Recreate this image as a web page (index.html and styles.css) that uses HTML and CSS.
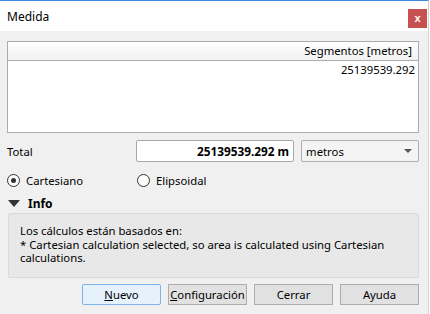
FILE: index.html
```html
<!DOCTYPE html>
<html lang="es">
<head>
    <meta charset="UTF-8">
    <title>Medida</title>
    <link rel="stylesheet" href="styles.css">
</head>
<body>
    <div class="window">
        <div class="titlebar">
            <span class="title">Medida</span>
            <button class="close">x</button>
        </div>
        <div class="content">
            <div class="table">
                <div class="th">Segmentos [metros]</div>
                <div class="td">25139539.292</div>
            </div>

            <div class="total-row">
                <span class="label">Total</span>
                <div class="total-input">25139539.292 m</div>
                <div class="combo">
                    <span>metros</span>
                    <span class="arrow"></span>
                </div>
            </div>

            <div class="radio-row">
                <label class="radio checked"><span class="dot"></span>Cartesiano</label>
                <label class="radio"><span class="dot"></span>Elipsoidal</label>
            </div>

            <div class="info-head">
                <span class="tri"></span>
                <span>Info</span>
            </div>
            <div class="info-box">
                Los cálculos están basados en:<br>
                * Cartesian calculation selected, so area is calculated using Cartesian calculations.
            </div>

            <div class="buttons">
                <button class="btn default"><u>N</u>uevo</button>
                <button class="btn"><u>C</u>onfiguración</button>
                <button class="btn">Cerrar</button>
                <button class="btn">Ayuda</button>
            </div>
        </div>
    </div>
</body>
</html>
```

FILE: styles.css
```css
body {
    margin: 0;
    background: #ffffff;
    font-family: "Noto Sans", "Open Sans", sans-serif;
    font-size: 11.3px;
    color: #000;
}

.window {
    width: 428px;
    height: 313px;
    border-top: 1px solid #3d8bd9;
    border-right: 1px solid #d4d4d4;
    background: #f0f0f0;
    display: flex;
    flex-direction: column;
}

.titlebar {
    height: 30px;
    background: #ffffff;
    display: flex;
    justify-content: space-between;
    align-items: flex-start;
}

.title {
    margin: 7px 0 0 7px;
    font-size: 12px;
}

.close {
    width: 19px;
    height: 19px;
    margin-top: 8px;
    margin-right: 1px;
    border: none;
    padding: 0;
    background: #c75050;
    color: #fff;
    font-family: "Liberation Sans", sans-serif;
    font-weight: bold;
    font-size: 11px;
    line-height: 17px;
}

.content {
    padding: 10px 9px 0 7px;
}

.table {
    height: 90px;
    border: 1px solid #acacac;
    background: #fff;
}

.th {
    height: 18px;
    line-height: 18px;
    border-bottom: 1px solid #acacac;
    background: linear-gradient(#ffffff, #f1f1f1);
    text-align: right;
    padding-right: 6px;
}

.td {
    text-align: right;
    padding-right: 3px;
    line-height: 18px;
}

.total-row {
    display: flex;
    align-items: center;
    margin-top: 7px;
    height: 22px;
}

.label {
    width: 130px;
}

.total-input {
    width: 154px;
    height: 20px;
    line-height: 20px;
    border: 1px solid #a8a8a8;
    border-radius: 2px;
    background: #fff;
    text-align: right;
    font-weight: bold;
    font-size: 11.8px;
    padding-right: 4px;
}

.combo {
    margin-left: 7px;
    width: 107px;
    height: 20px;
    border: 1px solid #adadad;
    border-radius: 2px;
    background: #f4f4f4;
    display: flex;
    justify-content: space-between;
    align-items: center;
    padding: 0 6px 0 4px;
}

.arrow {
    width: 0;
    height: 0;
    border-left: 4px solid transparent;
    border-right: 4px solid transparent;
    border-top: 4px solid #555;
}

.radio-row {
    display: flex;
    margin-top: 10px;
    height: 16px;
    align-items: center;
}

.radio {
    display: flex;
    align-items: center;
    width: 130px;
}

.dot {
    width: 11px;
    height: 11px;
    border: 1px solid #333;
    border-radius: 50%;
    background: #fff;
    margin-right: 6px;
    box-sizing: content-box;
    position: relative;
}

.checked .dot::after {
    content: "";
    position: absolute;
    left: 3px;
    top: 3px;
    width: 5px;
    height: 5px;
    border-radius: 50%;
    background: #333;
}

.info-head {
    display: flex;
    align-items: center;
    margin-top: 7px;
    height: 16px;
    font-weight: bold;
    font-size: 12px;
}

.tri {
    width: 0;
    height: 0;
    margin: 0 8px 0 1px;
    border-left: 6px solid transparent;
    border-right: 6px solid transparent;
    border-top: 7px solid #333;
}

.info-box {
    margin: 2px 0 0 1px;
    height: 53px;
    border: 1px solid #dadada;
    border-radius: 2px;
    background: #e8e8e8;
    padding: 10px 26px 0 11px;
    line-height: 13.5px;
}

.buttons {
    display: flex;
    justify-content: flex-end;
    gap: 7px;
    margin-top: 6px;
}

.btn {
    width: 79px;
    height: 21px;
    border: 1px solid #adadad;
    background: #e1e1e1;
    font-family: inherit;
    font-size: 11.3px;
    padding: 0;
}

.btn.default {
    border-color: #7eb4ea;
    background: #e5f1fb;
    border-radius: 2px;
}
```
